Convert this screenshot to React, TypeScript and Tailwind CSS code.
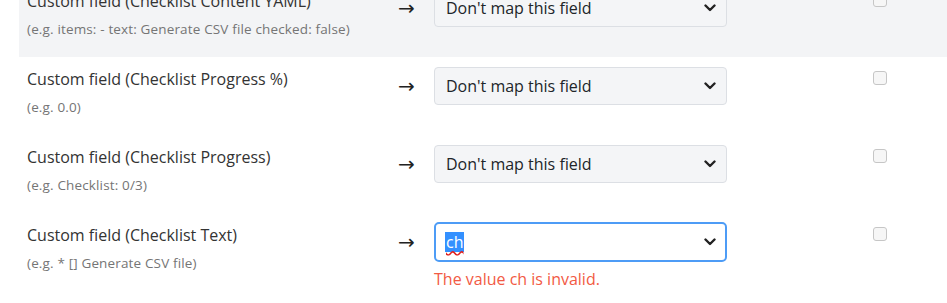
import type { ReactNode } from 'react';

interface FieldRow {
  label: string;
  example: string;
}

const rows: FieldRow[] = [
  { label: 'Custom field (Checklist Content YAML)', example: '(e.g. items: - text: Generate CSV file checked: false)' },
  { label: 'Custom field (Checklist Progress %)', example: '(e.g. 0.0)' },
  { label: 'Custom field (Checklist Progress)', example: '(e.g. Checklist: 0/3)' },
];

function Chevron() {
  return (
    <svg width="12" height="8" viewBox="0 0 12 8" className="shrink-0">
      <path d="M1.5 1.5 L6 6 L10.5 1.5" fill="none" stroke="#222" strokeWidth="2.4" strokeLinecap="round" strokeLinejoin="round" />
    </svg>
  );
}

function SelectBox({ children, focused }: { children: ReactNode; focused?: boolean }) {
  return (
    <div
      className={
        focused
          ? 'flex h-[40px] -my-px items-center justify-between rounded-[5px] border-2 border-[#4d9cf6] bg-white pl-[9px] pr-[9px]'
          : 'flex h-[38px] items-center justify-between rounded-[4px] border border-[#dcdfe4] bg-[#f4f5f7] pl-[11px] pr-[10px]'
      }
    >
      <span className="text-[16px] leading-none text-[#212529]">{children}</span>
      <Chevron />
    </div>
  );
}

function Row({ label, example, shaded, children, error }: FieldRow & { shaded?: boolean; children: ReactNode; error?: string }) {
  return (
    <div className={`grid grid-cols-[371px_36px_293px_1fr] pt-[10px] pl-2 min-h-[78px] ${shaded ? 'bg-[#f3f4f6]' : 'bg-white'}`}>
      <div>
        <div className="text-[16px] leading-6 text-[#333]">{label}</div>
        <div className="mt-[6px] text-[13.5px] leading-5 tracking-[0.15px] text-[#757575]">{example}</div>
      </div>
      <div className="flex h-[38px] items-center text-[20px] text-[#222]" style={{ fontFamily: '"DejaVu Sans", sans-serif' }}>→</div>
      <div>
        {children}
        {error && <div className="mt-[6px] text-[16px] leading-6 text-[#f25a44]">{error}</div>}
      </div>
      <div className="pl-[146px] pt-1">
        <div className="h-[14px] w-[14px] rounded-[3px] border border-[#c6c6c6] bg-[#f6f6f6]" />
      </div>
    </div>
  );
}

export default function App() {
  return (
    <div className="h-[303px] overflow-hidden bg-white pl-[19px]" style={{ fontFamily: '"Open Sans", "Noto Sans", sans-serif' }}>
      <div className="-mt-[21px]">
        {rows.map((r, i) => (
          <Row key={r.label} {...r} shaded={i === 0}>
            <SelectBox>Don't map this field</SelectBox>
          </Row>
        ))}
        <Row label="Custom field (Checklist Text)" example="(e.g. * [] Generate CSV file)" error="The value ch is invalid.">
          <SelectBox focused>
            <span className="inline-block bg-[#3390ff] px-px leading-5 text-white underline decoration-wavy decoration-[#e0201e] underline-offset-2">ch</span>
          </SelectBox>
        </Row>
      </div>
    </div>
  );
}
